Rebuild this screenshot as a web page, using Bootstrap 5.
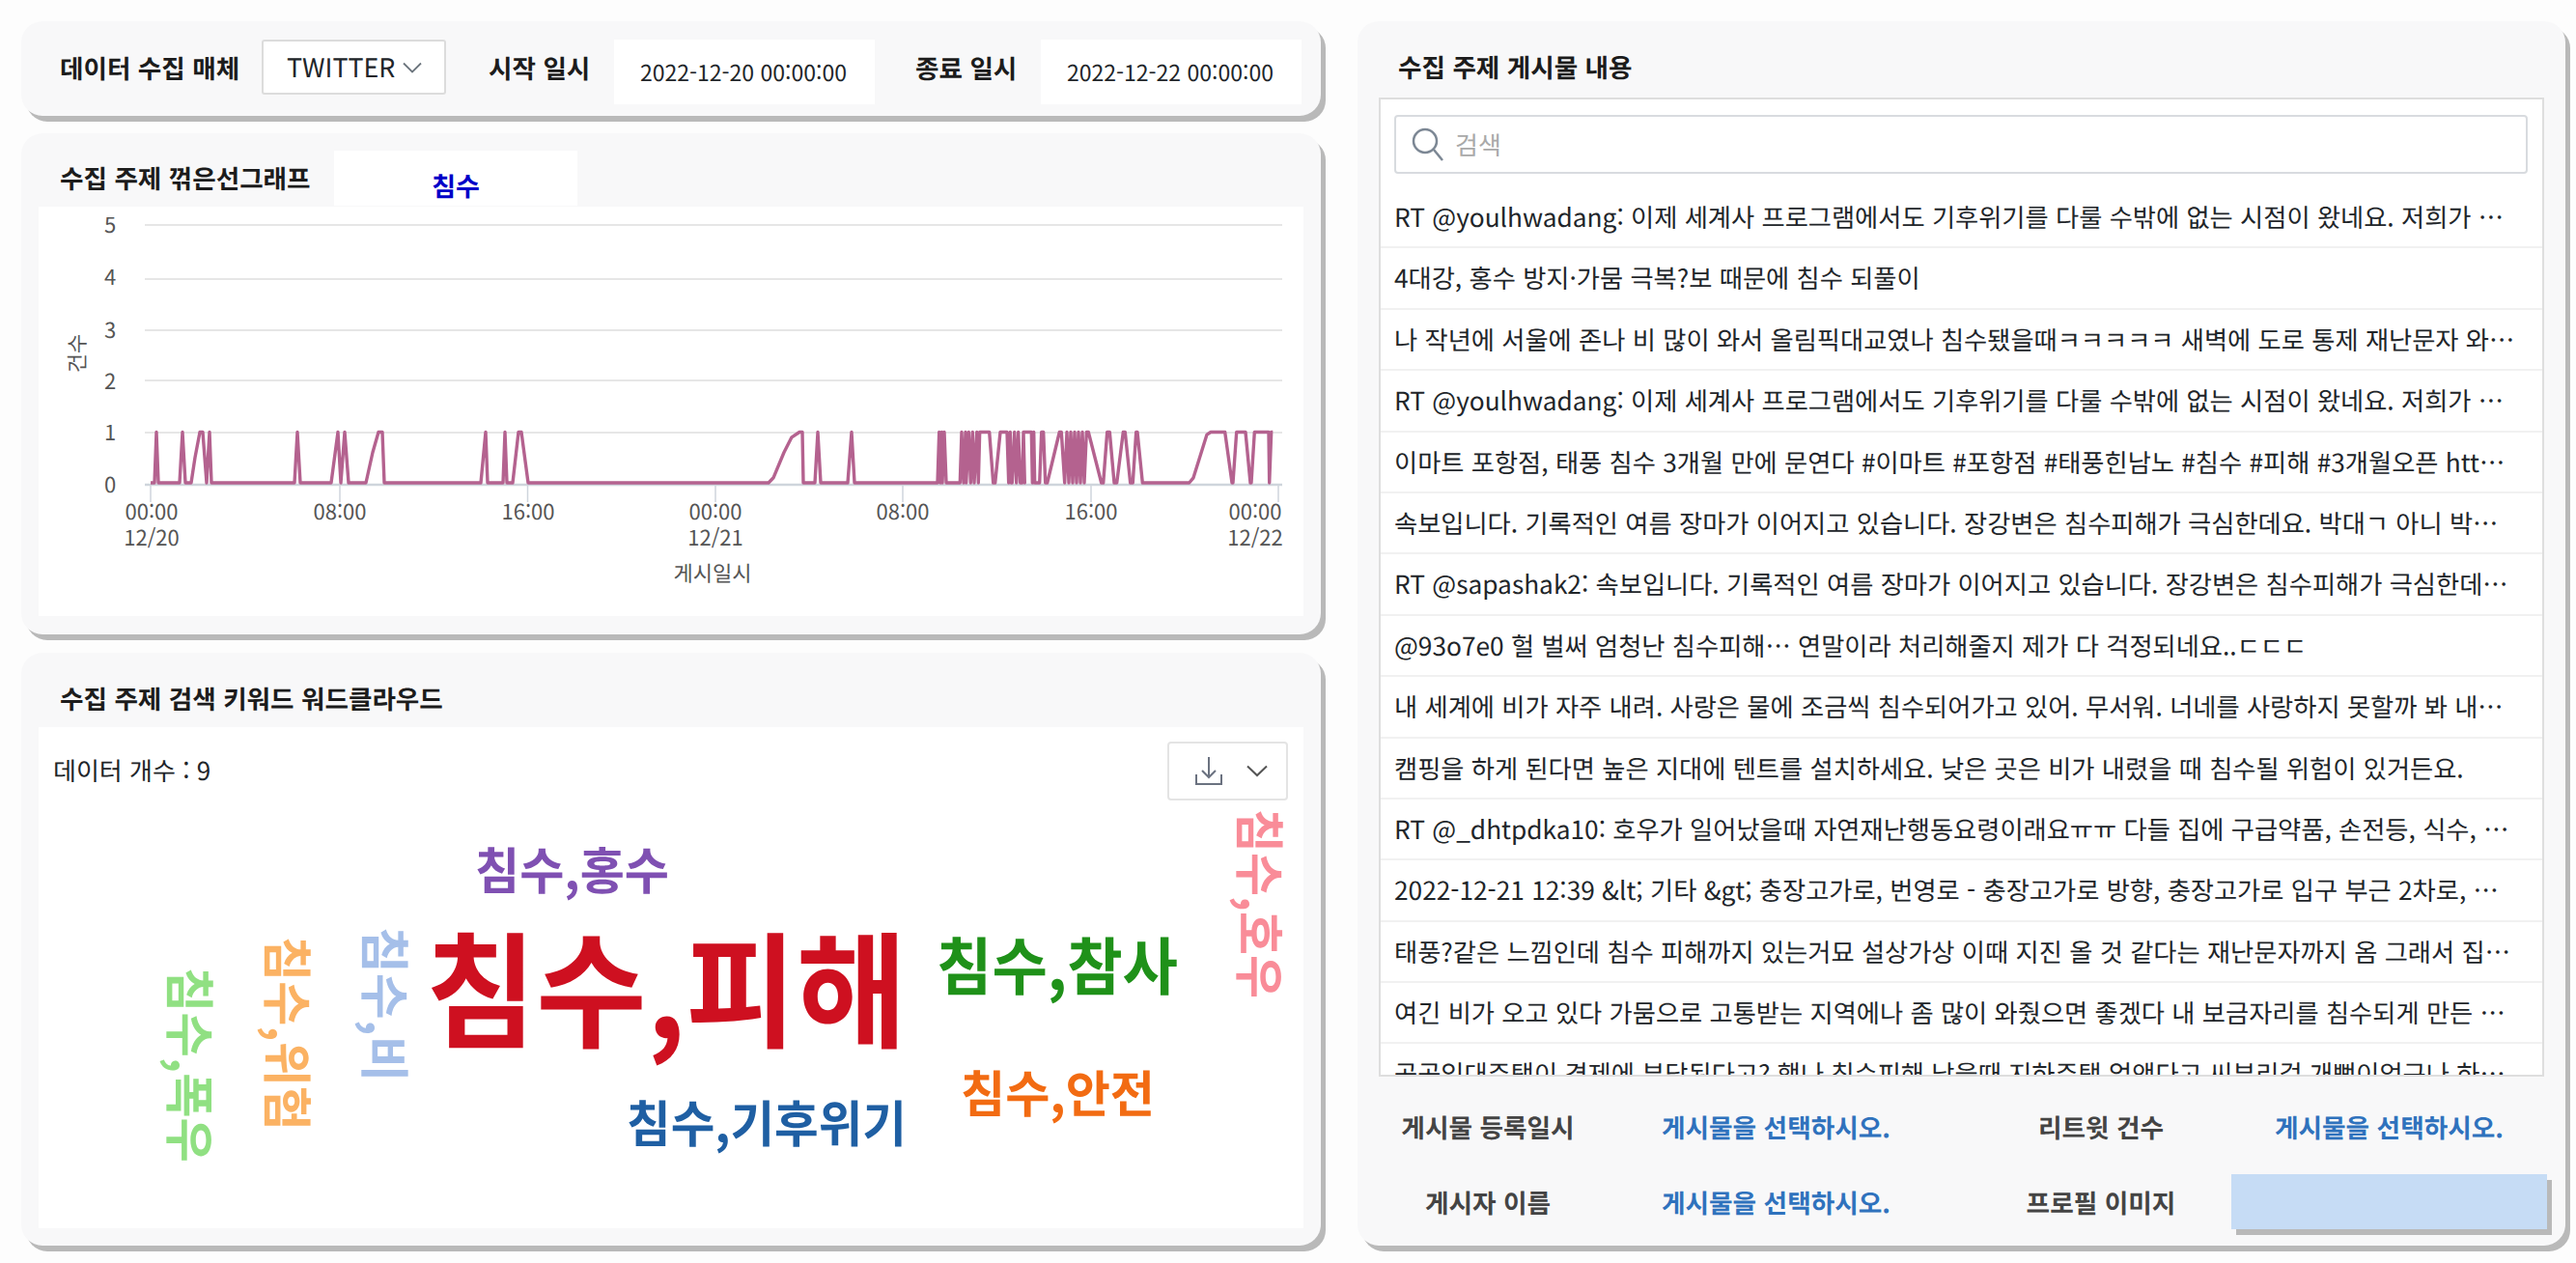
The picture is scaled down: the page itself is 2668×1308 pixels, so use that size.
<!DOCTYPE html>
<html lang="ko">
<head>
  <meta charset="UTF-8">
  <meta name="viewport" content="width=device-width, initial-scale=1">
  <title>수집 주제 대시보드</title>
  <link href="https://cdn.jsdelivr.net/npm/bootstrap@5.3.0/dist/css/bootstrap.min.css" rel="stylesheet">
  <style>
    html, body { height: 1308px; overflow: hidden; }
    body { background: #fdfdfd; color: #212529; font-family: "Noto Sans CJK KR", "Noto Sans", sans-serif; font-size: 26px; text-rendering: geometricPrecision; padding: 22px 0 0 22px; }
    .col-left { width: 1346px; margin-right: 38px; flex-shrink: 0; }
    .col-right { width: 1251px; height: 1268px; flex-shrink: 0; }
    .box-card { background: #f8f8f9; border: 0; border-radius: 22px; box-shadow: 5px 6px 0 #b9b9b9; }
    .head-txt { font-size: 26.6px; font-weight: 700; color: #1c1c1c; white-space: nowrap; }

    /* top filter bar */
    .filter-card { height: 98px; margin-bottom: 18px; padding: 19px 0 0 40px; }
    .filter-card > * { flex-shrink: 0; }
    .filter-card .head-txt { line-height: 57px; }
    .lbl-media { width: 209px; }
    .lbl-date { width: 130px; }
    .media-select { width: 191px; height: 57px; padding-left: 24px; background: #fff; border: 2px solid #dcdcdc; border-radius: 3px; margin-right: 44px; font-size: 26.8px; }
    .date-box { width: 270px; height: 67px; background: #fff; margin-right: 42px; padding: 10px 0 0 27px; font-size: 23px; line-height: 46px; }

    /* line chart */
    .chart-card { height: 519px; margin-bottom: 19px; }
    .chart-head { height: 76px; padding-left: 40px; }
    .chart-head .head-txt { width: 284px; line-height: 92px; }
    .topic-tab { width: 252px; height: 57px; margin-top: 18px; background: #fff; color: #0000c8; font-size: 27px; font-weight: 700; text-align: center; line-height: 44px; padding-top: 14px; }
    .white-panel { margin: 0 18px; background: #fff; }
    .chart-panel { height: 424px; }
    .chart-panel svg { display: block; }
    .ax-txt { font-family: "Noto Sans CJK KR", sans-serif; font-size: 22px; fill: #555; }

    /* word cloud */
    .cloud-card { height: 614px; }
    .cloud-head { height: 77px; padding-left: 40px; line-height: 94px; }
    .cloud-panel { height: 519px; }
    .cloud-words { position: absolute; left: 0; top: 0; }
    .cloud-words text { font-family: "Noto Sans CJK KR", sans-serif; font-weight: 700; }
    .count-row { position: relative; padding: 15px 16px 0 15px; }
    .count-txt { line-height: 60px; }
    .dl-btn { width: 125px; height: 61px; padding-left: 6px; background: #fff; border: 2px solid #e4e4e4; border-radius: 4px; }

    /* posts */
    .post-head { height: 79px; padding-left: 42px; line-height: 94px; }
    .post-box { width: 1207px; height: 1014px; margin-left: 22px; flex-shrink: 0; background: #fff; border: 2px solid #dedede; overflow: hidden; }
    .search-row { height: 61px; margin: 16px 15px 14px 14px; background: #fff; border: 2px solid #d8dbdf; border-radius: 4px; padding-left: 16px; gap: 11px; color: #a9a9a9; font-size: 26px; }
    .post-list .list-group-item { height: 63.4px; padding: 0 16px 0 14px; border-color: #f1f1f1; border-width: 0 0 2px; font-size: 26.25px; line-height: 61px; color: #212529; background: #fff; }
    .meta-grid { margin-top: 23px; }
    .meta-row { height: 57px; margin-bottom: 21px; }
    .meta-lbl { width: 270px; text-align: center; color: #444; font-weight: 700; font-size: 26.7px; line-height: 57px; }
    .meta-val { width: 327px; text-align: center; color: #2f72bd; font-weight: 700; font-size: 26.7px; line-height: 57px; }
    .meta-gap { width: 38px; }
    .thumb-box { width: 327px; height: 57px; background: #c6dcf5; box-shadow: 5px 6px 0 #b9b9b9; }
  </style>
</head>
<body>
  <div class="d-flex">
    <div class="col-left">

      <!-- filter bar -->
      <div class="card box-card filter-card flex-row">
        <div class="head-txt lbl-media">데이터 수집 매체</div>
        <div class="media-select d-flex align-items-center">
          TWITTER
          <svg class="ms-2" width="20" height="12" viewBox="0 0 20 12" fill="none" stroke="#6c757d" stroke-width="1.8"><path d="M1 1.5 10 10.5 19 1.5"/></svg>
        </div>
        <div class="head-txt lbl-date">시작 일시</div>
        <div class="date-box">2022-12-20 00:00:00</div>
        <div class="head-txt lbl-date">종료 일시</div>
        <div class="date-box">2022-12-22 00:00:00</div>
      </div>

      <!-- line chart -->
      <div class="card box-card chart-card">
        <div class="chart-head d-flex">
          <div class="head-txt">수집 주제 꺾은선그래프</div>
          <div class="topic-tab">침수</div>
        </div>
        <div class="white-panel chart-panel">
          <svg width="1310" height="424" viewBox="40 214 1310 424">
            <g stroke="#e6e6e6" stroke-width="2">
              <line x1="150" x2="1328" y1="233" y2="233"/>
              <line x1="150" x2="1328" y1="289" y2="289"/>
              <line x1="150" x2="1328" y1="342" y2="342"/>
              <line x1="150" x2="1328" y1="394" y2="394"/>
              <line x1="150" x2="1328" y1="448" y2="448"/>
            </g>
            <g stroke="#cfd5dc" stroke-width="1.5">
              <line x1="150" x2="1328" y1="502" y2="502" stroke-width="2.5"/>
              <line x1="156" x2="156" y1="502" y2="520"/>
              <line x1="352" x2="352" y1="502" y2="520"/>
              <line x1="546.5" x2="546.5" y1="502" y2="520"/>
              <line x1="741" x2="741" y1="502" y2="520"/>
              <line x1="935" x2="935" y1="502" y2="520"/>
              <line x1="1130" x2="1130" y1="502" y2="520"/>
              <line x1="1324" x2="1324" y1="502" y2="520"/>
            </g>
            <polyline id="trend" fill="none" stroke="#b4628f" stroke-width="3.4" stroke-linejoin="round"/>
            <g class="ax-txt" text-anchor="middle">
              <text x="114" y="241">5</text>
              <text x="114" y="295">4</text>
              <text x="114" y="350">3</text>
              <text x="114" y="403">2</text>
              <text x="114" y="456">1</text>
              <text x="114" y="510">0</text>
              <text x="157" y="538">00:00</text><text x="157" y="565">12/20</text>
              <text x="352" y="538">08:00</text>
              <text x="547" y="538">16:00</text>
              <text x="741" y="538">00:00</text><text x="741" y="565">12/21</text>
              <text x="935" y="538">08:00</text>
              <text x="1130" y="538">16:00</text>
              <text x="1300" y="538">00:00</text><text x="1300" y="565">12/22</text>
              <text x="738" y="602">게시일시</text>
              <text transform="translate(88 366) rotate(-90)">건수</text>
            </g>
          </svg>
        </div>
      </div>

      <!-- word cloud -->
      <div class="card box-card cloud-card">
        <div class="head-txt cloud-head">수집 주제 검색 키워드 워드클라우드</div>
        <div class="white-panel cloud-panel position-relative">
          <svg class="cloud-words" width="1310" height="519" viewBox="40 753 1310 519">
            <text x="441" y="1075" font-size="130" fill="#ce1020" textLength="498" lengthAdjust="spacingAndGlyphs">침수,피해</text>
            <text x="492" y="921" font-size="52" fill="#7f50b2" textLength="201" lengthAdjust="spacingAndGlyphs">침수,홍수</text>
            <text x="970" y="1025" font-size="65" fill="#1f9119" textLength="250" lengthAdjust="spacingAndGlyphs">침수,참사</text>
            <text x="995" y="1152" font-size="52" fill="#f26b12" textLength="201" lengthAdjust="spacingAndGlyphs">침수,안전</text>
            <text x="649" y="1183" font-size="52" fill="#1f5fa3" textLength="290" lengthAdjust="spacingAndGlyphs">침수,기후위기</text>
            <text transform="translate(1285 838) rotate(90)" font-size="52" fill="#f98c98" textLength="196" lengthAdjust="spacingAndGlyphs">침수,호우</text>
            <text transform="translate(379 960) rotate(90)" font-size="52" fill="#a5bfe9">침수,비</text>
            <text transform="translate(278 970) rotate(90)" font-size="52" fill="#fbb263" textLength="201" lengthAdjust="spacingAndGlyphs">침수,위험</text>
            <text transform="translate(177 1002) rotate(90)" font-size="52" fill="#90e082" textLength="202" lengthAdjust="spacingAndGlyphs">침수,폭우</text>
          </svg>
          <div class="count-row d-flex justify-content-between align-items-start">
            <span class="count-txt">데이터 개수 : 9</span>
            <div class="dl-btn d-flex align-items-center justify-content-center gap-4">
              <svg width="30" height="32" viewBox="0 0 30 32" fill="none" stroke="#6b7280" stroke-width="2"><path d="M15 1V22M8 15l7 7 7-7M2 19V29H28V19"/></svg>
              <svg width="22" height="13" viewBox="0 0 22 13" fill="none" stroke="#555" stroke-width="2"><path d="M1 1.5 11 11 21 1.5"/></svg>
            </div>
          </div>
        </div>
      </div>
    </div>

    <!-- posts -->
    <div class="card box-card col-right">
      <div class="head-txt post-head">수집 주제 게시물 내용</div>
      <div class="post-box">
        <div class="search-row d-flex align-items-center">
          <svg width="34" height="36" viewBox="0 0 34 36" fill="none" stroke="#7c8794" stroke-width="2.5"><circle cx="14" cy="14" r="12"/><path d="M23 23 32 34"/></svg>
          <span>검색</span>
        </div>
        <ul class="list-group list-group-flush post-list">
          <li class="list-group-item text-nowrap">RT @youlhwadang: 이제 세계사 프로그램에서도 기후위기를 다룰 수밖에 없는 시점이 왔네요. 저희가 …</li>
          <li class="list-group-item text-nowrap">4대강, 홍수 방지·가뭄 극복?보 때문에 침수 되풀이</li>
          <li class="list-group-item text-nowrap">나 작년에 서울에 존나 비 많이 와서 올림픽대교였나 침수됐을때ㅋㅋㅋㅋㅋ 새벽에 도로 통제 재난문자 와…</li>
          <li class="list-group-item text-nowrap">RT @youlhwadang: 이제 세계사 프로그램에서도 기후위기를 다룰 수밖에 없는 시점이 왔네요. 저희가 …</li>
          <li class="list-group-item text-nowrap">이마트 포항점, 태풍 침수 3개월 만에 문연다 #이마트 #포항점 #태풍힌남노 #침수 #피해 #3개월오픈 htt…</li>
          <li class="list-group-item text-nowrap">속보입니다. 기록적인 여름 장마가 이어지고 있습니다. 장강변은 침수피해가 극심한데요. 박대ㄱ 아니 박…</li>
          <li class="list-group-item text-nowrap">RT @sapashak2: 속보입니다. 기록적인 여름 장마가 이어지고 있습니다. 장강변은 침수피해가 극심한데…</li>
          <li class="list-group-item text-nowrap">@93o7e0 헐 벌써 엄청난 침수피해… 연말이라 처리해줄지 제가 다 걱정되네요..ㄷㄷㄷ</li>
          <li class="list-group-item text-nowrap">내 세계에 비가 자주 내려. 사랑은 물에 조금씩 침수되어가고 있어. 무서워. 너네를 사랑하지 못할까 봐 내…</li>
          <li class="list-group-item text-nowrap">캠핑을 하게 된다면 높은 지대에 텐트를 설치하세요. 낮은 곳은 비가 내렸을 때 침수될 위험이 있거든요.</li>
          <li class="list-group-item text-nowrap">RT @_dhtpdka10: 호우가 일어났을때 자연재난행동요령이래요ㅠㅠ 다들 집에 구급약품, 손전등, 식수, …</li>
          <li class="list-group-item text-nowrap">2022-12-21 12:39 &amp;lt; 기타 &amp;gt; 충장고가로, 번영로 - 충장고가로 방향, 충장고가로 입구 부근 2차로, …</li>
          <li class="list-group-item text-nowrap">태풍?같은 느낌인데 침수 피해까지 있는거묘 설상가상 이때 지진 올 것 같다는 재난문자까지 옴 그래서 집…</li>
          <li class="list-group-item text-nowrap">여긴 비가 오고 있다 가뭄으로 고통받는 지역에나 좀 많이 와줬으면 좋겠다 내 보금자리를 침수되게 만든 …</li>
          <li class="list-group-item text-nowrap">공공임대주택이 경제에 부담된다고? 했나 침수피해 났을때 지하주택 없앤다고 씨부리걸 개뻥이었구나 하…</li>
        </ul>
      </div>
      <div class="meta-grid">
        <div class="meta-row d-flex">
          <div class="meta-lbl">게시물 등록일시</div>
          <div class="meta-val">게시물을 선택하시오.</div>
          <div class="meta-gap"></div>
          <div class="meta-lbl">리트윗 건수</div>
          <div class="meta-val">게시물을 선택하시오.</div>
        </div>
        <div class="meta-row d-flex">
          <div class="meta-lbl">게시자 이름</div>
          <div class="meta-val">게시물을 선택하시오.</div>
          <div class="meta-gap"></div>
          <div class="meta-lbl">프로필 이미지</div>
          <div class="thumb-box"></div>
        </div>
      </div>
    </div>
  </div>

  <script src="https://cdn.jsdelivr.net/npm/bootstrap@5.3.0/dist/js/bootstrap.bundle.min.js"></script>
  <script>
    // [x, level] turning points of the series, x in page pixels
    const sparse = [[156,0],[160,0],[162,1],[164,0],[186,0],[189,1],[192,0],[198,0],[202,.5],[207,1],[210,1],[214,0],[217,1],[219,0],
      [305,0],[308,1],[311,0],[343,0],[350,1],[353,0],[357,1],[361,0],[379,0],[386,.6],[392,1],[396,1],[398,0],
      [498,0],[503,1],[505,0],[521,0],[523,1],[525,0],[531,0],[537,1],[540,1],[547,0],
      [796,0],[801,.1],[812,.6],[820,.9],[828,1],[831,1],[832,0],[844,0],[847,1],[850,0],[878,0],[882,1],[885,0]];
    // dense part, read off at 3x from x=960
    const dense = [[33,0],[38,1],[42,0],[46,1],[48,0],[54,1],[60,0],[103,0],[108,1],[114,0],[120,1],[122,0],
      [130,1],[136,0],[142,1],[147,0],[155,1],[160,0],[164,1],[194,1],[206,0],[212,0],[228,1],[249,1],
      [254,0],[259,1],[262,0],[265,0],[272,1],[278,0],[284,1],[290,0],[296,0],[300,1],[304,0],[300,1],[325,1],
      [328,0],[332,1],[335,0],[350,0],[356,1],[362,1],[368,0],[374,0],[412,1],[418,1],[428,0],[435,1],[441,0],[447,1],[453,0],
      [459,1],[465,0],[471,1],[477,0],[483,1],[489,0],[496,1],[502,1],[542,0],[548,0],[560,1],[568,1],[582,0],[590,0]];
    // tail, read off at 3x from x=1150
    const tail = [[40,1],[46,1],[62,0],[70,0],[80,1],[84,1],[100,0],[245,0],[258,.1],[285,.65],[300,.95],[312,1],[356,1],[378,0],[381,0],[392,1],[420,1],[435,0],[438,0],[448,1],[492,1],[494,0],[500,1],[505,1]];
    const toY = lv => 500 - lv * 52.5;
    const pts = sparse.map(p => [p[0], p[1]])
      .concat(dense.map(p => [960 + p[0] / 3, p[1]]))
      .concat(tail.map(p => [1150 + p[0] / 3, p[1]]));
    document.getElementById('trend').setAttribute('points', pts.map(p => p[0].toFixed(1) + ',' + toY(p[1]).toFixed(1)).join(' '));
  </script>
</body>
</html>
